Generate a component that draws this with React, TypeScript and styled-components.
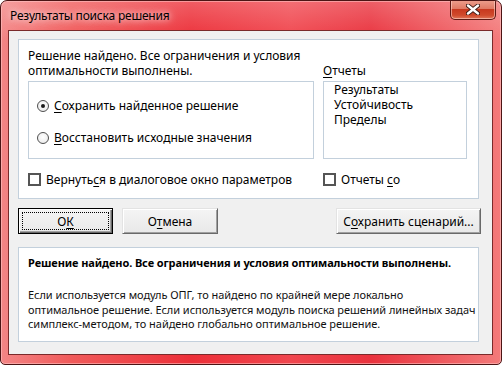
import React from "react";
import styled, { createGlobalStyle } from "styled-components";

const GlobalStyle = createGlobalStyle`
  html, body {
    margin: 0;
    padding: 0;
    background: #ffffff;
  }
  body {
    font-family: "Noto Sans", "Open Sans", sans-serif;
    font-size: 12px;
    color: #000;
  }
`;

const Frame = styled.div`
  width: 502px;
  height: 365px;
  box-sizing: border-box;
  border: 1px solid #4c1414;
  border-radius: 7px 7px 5px 5px;
  background:
    linear-gradient(to bottom, rgba(255, 255, 255, 0.22), rgba(255, 255, 255, 0) 40px),
    linear-gradient(to right, #f38585 0%, #f05a5a 14%, #ec2f38 38%, #f0464e 58%, #e9323d 74%, #f37a7a 100%);
  box-shadow: inset 0 0 0 1px rgba(255, 200, 200, 0.55);
  display: flex;
  flex-direction: column;
  padding: 0 8px 9px 7px;
  overflow: hidden;
`;

const TitleBar = styled.div`
  height: 29px;
  flex-shrink: 0;
  display: flex;
  justify-content: space-between;
  align-items: flex-start;
`;

const Title = styled.span`
  margin: 6px 0 0 2px;
  font-size: 12px;
  letter-spacing: -0.2px;
  color: #000;
  text-shadow: 0 0 6px rgba(255, 230, 230, 0.9), 0 0 10px rgba(255, 230, 230, 0.8);
`;

const CloseButton = styled.div`
  width: 46px;
  height: 20px;
  margin: -1px -3px 0 0;
  box-sizing: border-box;
  border: 1px solid #5e1a14;
  border-top: none;
  border-radius: 0 0 5px 5px;
  background: linear-gradient(to bottom, #eda08f 0%, #e07a65 45%, #c8391f 50%, #d04a2c 80%, #e0775a 100%);
  box-shadow: inset 0 0 0 1px rgba(255, 210, 200, 0.6);
  display: flex;
  align-items: center;
  justify-content: center;
`;

const Client = styled.div`
  flex: 1;
  min-height: 0;
  background: #f0f0f0;
  border: 1px solid #7a2a2a;
  padding: 8px 13px 12px 9px;
  display: flex;
  flex-direction: column;
`;

const Panel = styled.div`
  background: #ffffff;
  border: 1px solid #c3d0dc;
`;

const TopPanel = styled(Panel)`
  height: 160px;
  flex-shrink: 0;
  box-sizing: border-box;
  padding: 8px 13px 0 9px;
  display: grid;
  grid-template-columns: 286px 144px;
  grid-template-rows: 30px 78px auto;
  align-content: start;
  column-gap: 9px;
  row-gap: 3px;
`;

const Message = styled.div`
  line-height: 15px;
  white-space: nowrap;
`;

const SideLabel = styled.div`
  align-self: end;
  line-height: 15px;
`;

const Box = styled.div`
  border: 1px solid #c3d0dc;
  box-sizing: border-box;
`;

const OptionsBox = styled(Box)`
  padding: 16px 0 0 8px;
  display: flex;
  flex-direction: column;
  gap: 17px;
`;

const ListBox = styled(Box)`
  padding: 0 0 0 10px;
  line-height: 15px;
`;

const Choice = styled.label`
  display: flex;
  align-items: center;
  gap: 5px;
  line-height: 15px;
`;

const Radio = styled.span<{ checked?: boolean }>`
  width: 12px;
  height: 12px;
  box-sizing: border-box;
  border-radius: 50%;
  border: 1px solid #4f4f4f;
  background: radial-gradient(circle at 50% 40%, #ffffff, #e6e6e6);
  display: flex;
  align-items: center;
  justify-content: center;
  &::after {
    content: "";
    width: 4px;
    height: 4px;
    border-radius: 50%;
    background: #1a1a1a;
    display: ${(p) => (p.checked ? "block" : "none")};
  }
`;

const CheckRow = styled.label`
  margin-top: 10px;
  align-self: start;
  display: flex;
  align-items: center;
  gap: 5px;
  line-height: 15px;
  white-space: nowrap;
`;

const Check = styled.span`
  width: 13px;
  height: 13px;
  box-sizing: border-box;
  border: 2px solid #555555;
  background: #ffffff;
`;

const Key = styled.span`
  text-decoration: underline;
  text-underline-offset: 2px;
`;

const ButtonRow = styled.div`
  margin: 9px -2px 0 0;
  height: 26px;
  flex-shrink: 0;
  display: flex;
  gap: 9px;
`;

const Button = styled.button<{ primary?: boolean; width: number }>`
  position: relative;
  width: ${(p) => p.width}px;
  height: 26px;
  font-family: inherit;
  font-size: 12px;
  color: #000;
  background: linear-gradient(to bottom, #f4f4f4, #e8e8e8);
  border: 1px solid;
  border-color: ${(p) => (p.primary ? "#000" : "#e3e3e3 #696969 #696969 #e3e3e3")};
  box-shadow: ${(p) =>
    p.primary
      ? "inset 1px 1px #ffffff, inset -1px -1px #696969, inset -2px -2px #a0a0a0"
      : "inset 1px 1px #ffffff, inset -1px -1px #a0a0a0"};
  padding: 0;
  &::after {
    content: "";
    display: ${(p) => (p.primary ? "block" : "none")};
    position: absolute;
    inset: 3px;
    border: 1px dotted #000;
  }
`;

const Spacer = styled.div`
  flex: 1;
`;

const InfoPanel = styled(Panel)`
  margin-top: 13px;
  flex: 1;
  min-height: 0;
  padding: 7px 0 0 9px;
  font-size: 11px;
  line-height: 15px;
  white-space: nowrap;
  overflow: hidden;
`;

const InfoTitle = styled.div`
  font-weight: 700;
  letter-spacing: -0.1px;
  margin-bottom: 18px;
`;

const InfoText = styled.div`
  line-height: 14.5px;
  letter-spacing: -0.05px;
  color: #111;
`;

const CloseIcon = () => (
  <svg width="14" height="11" viewBox="0 0 14 11">
    <path d="M2 1.5 L12 9.5 M12 1.5 L2 9.5" stroke="#3a1a14" strokeWidth="4.2" strokeLinecap="round" />
    <path d="M2 1.5 L12 9.5 M12 1.5 L2 9.5" stroke="#ffffff" strokeWidth="2.4" strokeLinecap="round" />
  </svg>
);

export default function App() {
  return (
    <>
      <GlobalStyle />
      <Frame>
        <TitleBar>
          <Title>Результаты поиска решения</Title>
          <CloseButton>
            <CloseIcon />
          </CloseButton>
        </TitleBar>
        <Client>
          <TopPanel>
            <Message>
              Решение найдено. Все ограничения и условия
              <br />
              оптимальности выполнены.
            </Message>
            <SideLabel>
              <Key>О</Key>тчеты
            </SideLabel>
            <OptionsBox>
              <Choice>
                <Radio checked />
                <span>
                  <Key>С</Key>охранить найденное решение
                </span>
              </Choice>
              <Choice>
                <Radio />
                <span>
                  <Key>В</Key>осстановить исходные значения
                </span>
              </Choice>
            </OptionsBox>
            <ListBox>
              <div>Результаты</div>
              <div>Устойчивость</div>
              <div>Пределы</div>
            </ListBox>
            <CheckRow>
              <Check />
              <span>
                Вернуть<Key>с</Key>я в диалоговое окно параметров
              </span>
            </CheckRow>
            <CheckRow>
              <Check />
              <span>
                Отчеты <Key>с</Key>о
              </span>
            </CheckRow>
          </TopPanel>
          <ButtonRow>
            <Button primary width={95}>
              О<Key>К</Key>
            </Button>
            <Button width={96}>
              О<Key>т</Key>мена
            </Button>
            <Spacer />
            <Button width={145}>
              С<Key>о</Key>хранить сценарий...
            </Button>
          </ButtonRow>
          <InfoPanel>
            <InfoTitle>Решение найдено. Все ограничения и условия оптимальности выполнены.</InfoTitle>
            <InfoText>
              Если используется модуль ОПГ, то найдено по крайней мере локально
              <br />
              оптимальное решение. Если используется модуль поиска решений линейных задач
              <br />
              симплекс-методом, то найдено глобально оптимальное решение.
            </InfoText>
          </InfoPanel>
        </Client>
      </Frame>
    </>
  );
}
